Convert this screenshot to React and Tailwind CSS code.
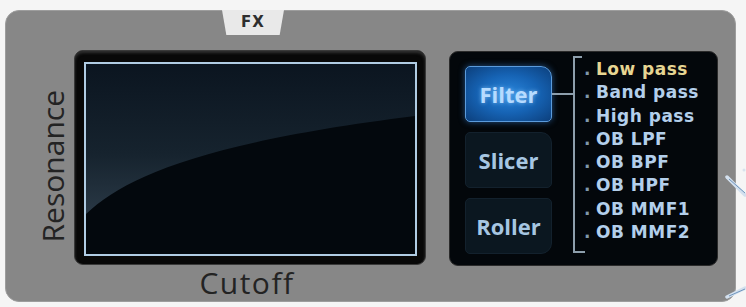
import React from "react";

const items = ["Low pass", "Band pass", "High pass", "OB LPF", "OB BPF", "OB HPF", "OB MMF1", "OB MMF2"];

function Screen() {
  return (
    <svg viewBox="0 0 329 190" preserveAspectRatio="none" className="block w-full h-full">
      <defs>
        <linearGradient id="gl" x1="0" y1="0" x2="0" y2="1">
          <stop offset="0" stopColor="#0b1520" />
          <stop offset="0.6" stopColor="#16232e" />
          <stop offset="1" stopColor="#293845" />
        </linearGradient>
      </defs>
      <rect x="0" y="0" width="329" height="190" fill="#03080d" />
      <path d="M0 150 C 40 112, 120 78, 329 52 L329 0 L0 0 Z" fill="url(#gl)" />
    </svg>
  );
}

export default function App() {
  const sans = { fontFamily: '"DejaVu Sans", Verdana, sans-serif' };
  const open = { fontFamily: '"Open Sans", sans-serif' };
  return (
    <div className="relative w-[746px] h-[307px] bg-[#f5f5f5] pt-[10px] pl-[5px] pr-[10px] pb-[5px] overflow-hidden">
      <div className="relative h-full rounded-[14px] bg-[#878787] border border-[#9d9d9d] flex items-start">
        {/* FX tab */}
        <div className="absolute left-[216px] top-[-1px] w-[62px] h-[25px] bg-[#e9e9e9] [clip-path:polygon(0_0,100%_0,93%_100%,7%_100%)] flex items-center justify-center">
          <span className="text-[15px] font-bold text-[#2e2e2e] tracking-[1px] leading-none" style={sans}>FX</span>
        </div>

        {/* Resonance label */}
        <div className="w-[68px] h-full flex items-center justify-end pr-[6px] pt-[20px]">
          <span className="[writing-mode:vertical-rl] rotate-180 text-[30px] leading-[30px] text-[#232323]" style={open}>
            Resonance
          </span>
        </div>

        {/* Display */}
        <div className="w-[352px] mt-[39px] flex flex-col items-center">
          <div className="w-full h-[215px] rounded-[9px] bg-[#080808] border border-[#3a3a3a] pl-[9px] pt-[11px] pr-[8px] pb-[8px] shadow-[inset_0_2px_3px_rgba(90,90,90,0.5)]">
            <div className="w-full h-full border-2 border-[#b0cce3] overflow-hidden">
              <Screen />
            </div>
          </div>
          <div className="text-[30px] leading-[34px] text-[#232323] tracking-[1.5px] mt-[1px] pr-[6px]" style={open}>
            Cutoff
          </div>
        </div>

        {/* Right FX panel */}
        <div className="ml-[23px] mt-[40px] w-[269px] h-[215px] rounded-[9px] bg-[#03070b] border border-[#2b2b2b] flex items-start pl-[15px]" style={sans}>
          <div className="mt-[14px] flex flex-col gap-[10px]" style={open}>
            <div className="w-[87px] h-[56px] rounded-[5px] rounded-tr-[11px] border border-[#5b9bdb] bg-[radial-gradient(ellipse_at_center,#2a86dc_0%,#1663b4_50%,#0c3f7c_100%)] shadow-[0_0_6px_rgba(60,140,230,0.55)] flex items-center justify-center">
              <span className="text-[22px] font-bold text-[#b6dbff] [text-shadow:0_0_4px_rgba(150,210,255,0.7)]">Filter</span>
            </div>
            <div className="w-[87px] h-[56px] rounded-[5px] rounded-tr-[11px] border border-[#13212d] bg-[#0b1720] flex items-center justify-center">
              <span className="text-[22px] font-bold text-[#a6c6e2]">Slicer</span>
            </div>
            <div className="w-[87px] h-[56px] rounded-[5px] rounded-br-[11px] border border-[#13212d] bg-[#0b1720] flex items-center justify-center">
              <span className="text-[22px] font-bold text-[#a6c6e2]">Roller</span>
            </div>
          </div>

          {/* connector */}
          <div className="w-[21px] mt-[41px]">
            <div className="h-[2px] bg-[#8d9eac]" />
          </div>

          {/* bracket + list */}
          <div className="relative mt-[4px] h-[197px] border-l-2 border-[#8d9eac] pl-[9px] pt-[2px]">
            <div className="absolute left-0 top-0 w-[7px] h-[2px] bg-[#8d9eac]" />
            <div className="absolute left-0 bottom-0 w-[10px] h-[2px] bg-[#8d9eac]" />
            {items.map((t, i) => (
              <div key={t} className="flex items-baseline leading-[23.3px] text-[17px] font-bold tracking-[0.5px] whitespace-nowrap">
                <span className="mr-[5px] text-[#7f98ad]">.</span>
                <span className={i === 0 ? "text-[#e6d592]" : "text-[#b3cfeb]"}>{t}</span>
              </div>
            ))}
          </div>
        </div>
      </div>

      {/* partial knobs at right edge */}
      <svg className="absolute right-0 top-[165px] w-[22px] h-[40px]" viewBox="0 0 22 40">
        <path d="M3 12 L21 30" stroke="#d3e0ee" strokeWidth="3.5" strokeLinecap="round" />
        <path d="M5 14 L21 28" stroke="#6f95bd" strokeWidth="1" />
        <circle cx="20" cy="5" r="1.5" fill="#d8e2ec" />
      </svg>
      <svg className="absolute right-0 top-[280px] w-[22px] h-[22px]" viewBox="0 0 22 22">
        <path d="M3 17 L21 8" stroke="#d3e0ee" strokeWidth="3.5" strokeLinecap="round" />
        <path d="M5 16 L21 9" stroke="#6f95bd" strokeWidth="1" />
      </svg>
    </div>
  );
}
